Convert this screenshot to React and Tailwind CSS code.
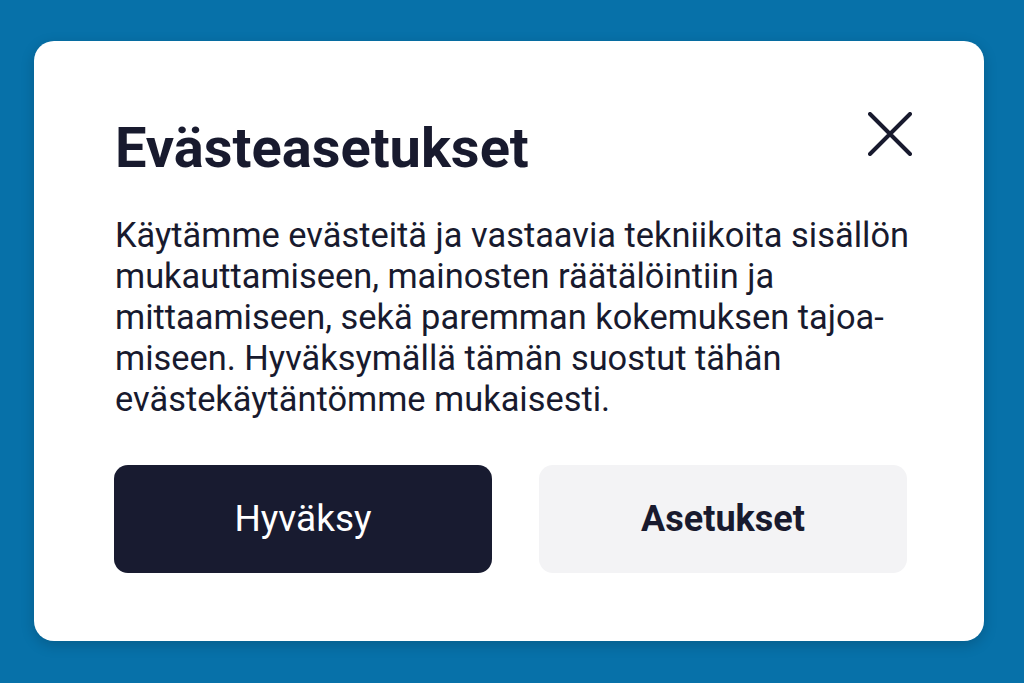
export default function App() {
  return (
    <div className="w-[1024px] h-[683px] bg-[#0771a9] pt-[41px] pl-[34px]" style={{ fontFamily: "Roboto, 'Noto Sans', sans-serif" }}>
      <div className="w-[950px] h-[600px] bg-white rounded-[20px] shadow-[0_4px_14px_rgba(0,0,0,0.18)] pl-[81px] pr-[72px] pt-[79px] text-[#181a2e]">
        <div className="flex items-start justify-between">
          <h1 className="text-[56px] leading-[56px] font-bold">Evästeasetukset</h1>
          <button className="w-[44px] h-[44px] mt-[-8px] flex items-center justify-center">
            <svg width="44" height="44" viewBox="0 0 44 44" fill="none" stroke="#181a2e" strokeWidth="4" strokeLinecap="round">
              <path d="M2 2L42 42M42 2L2 42" />
            </svg>
          </button>
        </div>
        <p className="mt-[39px] text-[34.4px] leading-[41px] whitespace-nowrap">
          Käytämme evästeitä ja vastaavia tekniikoita sisällön<br />
          mukauttamiseen, mainosten räätälöintiin ja<br />
          mittaamiseen, sekä paremman kokemuksen tajoa-<br />
          miseen. Hyväksymällä tämän suostut tähän<br />
          evästekäytäntömme mukaisesti.
        </p>
        <div className="mt-[45px] flex gap-[47px] ml-[-1px]">
          <button className="w-[378px] h-[108px] rounded-[14px] bg-[#181b30] text-white text-[37px] font-normal">Hyväksy</button>
          <button className="w-[368px] h-[108px] rounded-[14px] bg-[#f3f3f5] text-[#181a2e] text-[36px] font-bold">Asetukset</button>
        </div>
      </div>
    </div>
  );
}
